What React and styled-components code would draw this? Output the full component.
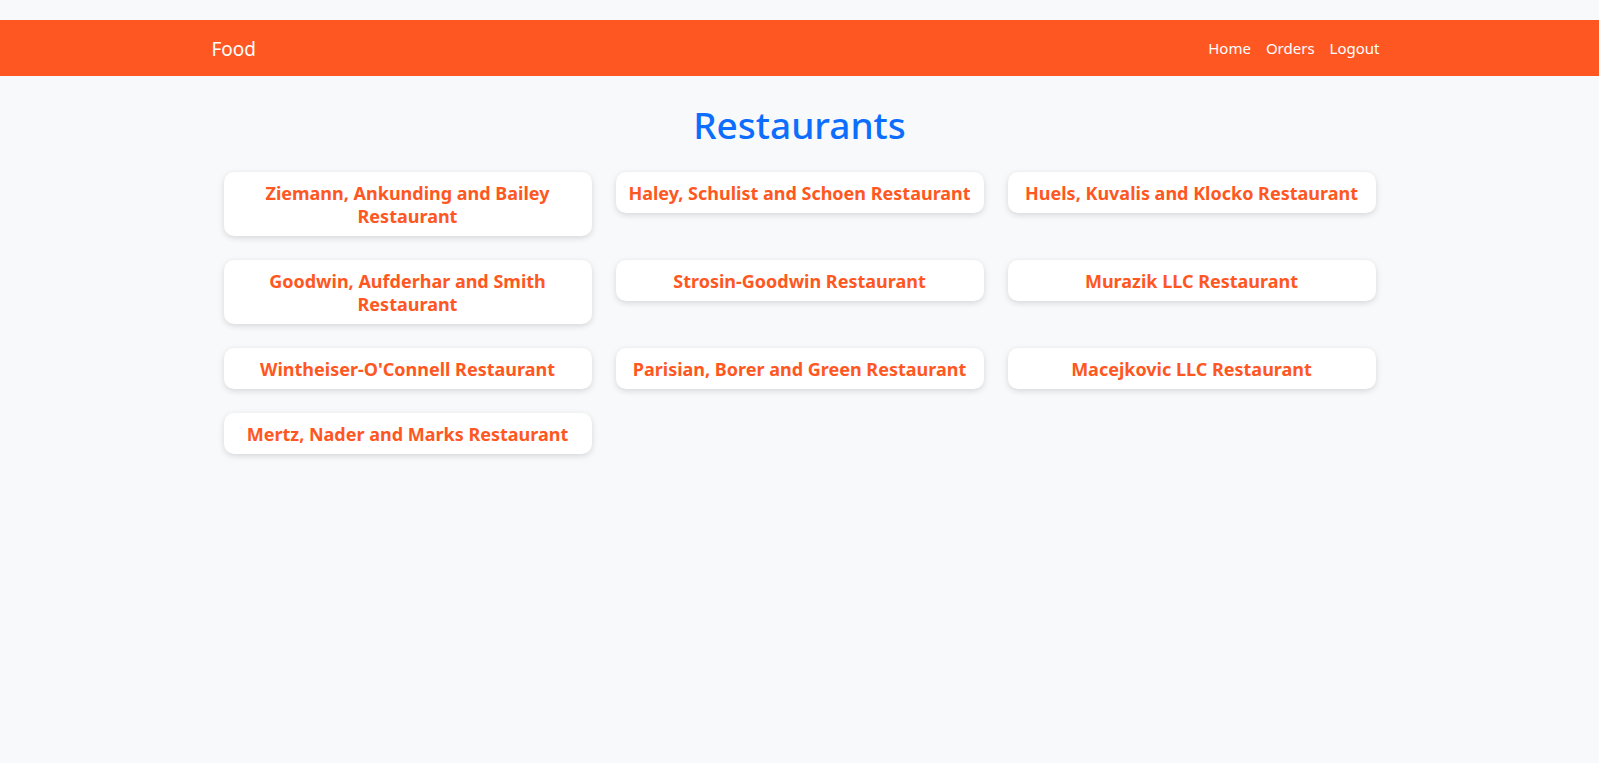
import React from "react";
import styled, { createGlobalStyle } from "styled-components";

const GlobalStyle = createGlobalStyle`
  html, body {
    margin: 0;
    padding: 0;
    background-color: #f8f9fa;
    font-family: "Noto Sans", "Open Sans", sans-serif;
  }
`;

const Page = styled.div`
  min-height: 100vh;
  padding-top: 20px;
  box-sizing: border-box;
  background-color: #f8f9fa;
`;

const Navbar = styled.nav`
  background-color: #ff5722;
  height: 56px;
  display: flex;
  align-items: center;
`;

const Container = styled.div`
  width: 1200px;
  max-width: 100%;
  margin: 0 auto;
  padding: 0 12px;
  box-sizing: border-box;
`;

const NavInner = styled(Container)`
  display: flex;
  align-items: center;
  justify-content: space-between;
`;

const Brand = styled.a`
  color: #fff;
  font-size: 19px;
  line-height: 30px;
  padding-top: 2px;
  text-decoration: none;
`;

const NavLinks = styled.ul`
  display: flex;
  list-style: none;
  margin: 0;
  padding: 0;
`;

const NavLink = styled.a`
  display: block;
  color: #fff;
  font-size: 15px;
  line-height: 24px;
  padding: 8px 7.5px;
  text-decoration: none;

  &:last-child {
    padding-right: 8px;
  }
`;

const Title = styled.h1`
  margin: 25px 0 23px;
  text-align: center;
  color: #0d6efd;
  font-size: 37px;
  line-height: 48px;
  font-weight: 500;
`;

const Grid = styled.div`
  display: grid;
  grid-template-columns: repeat(3, 1fr);
  gap: 24px;
  align-items: start;
  padding: 0 12px;
`;

const Card = styled.div`
  background-color: #fff;
  border-radius: 10px;
  box-shadow: 0 2px 6px rgba(0, 0, 0, 0.14);
  padding: 10px 12px 8px;
  text-align: center;
  color: #ff5722;
  font-size: 18px;
  font-weight: 700;
  line-height: 23px;
`;

const restaurants = [
  "Ziemann, Ankunding and Bailey Restaurant",
  "Haley, Schulist and Schoen Restaurant",
  "Huels, Kuvalis and Klocko Restaurant",
  "Goodwin, Aufderhar and Smith Restaurant",
  "Strosin-Goodwin Restaurant",
  "Murazik LLC Restaurant",
  "Wintheiser-O'Connell Restaurant",
  "Parisian, Borer and Green Restaurant",
  "Macejkovic LLC Restaurant",
  "Mertz, Nader and Marks Restaurant",
];

const App = () => {
  return (
    <>
      <GlobalStyle />
      <Page>
        <Navbar>
          <NavInner>
            <Brand href="#">Food</Brand>
            <NavLinks>
              <NavLink href="#">Home</NavLink>
              <NavLink href="#">Orders</NavLink>
              <NavLink href="#">Logout</NavLink>
            </NavLinks>
          </NavInner>
        </Navbar>

        <Container>
          <Title>Restaurants</Title>
          <Grid>
            {restaurants.map((name) => (
              <Card key={name}>{name}</Card>
            ))}
          </Grid>
        </Container>
      </Page>
    </>
  );
};

export default App;
